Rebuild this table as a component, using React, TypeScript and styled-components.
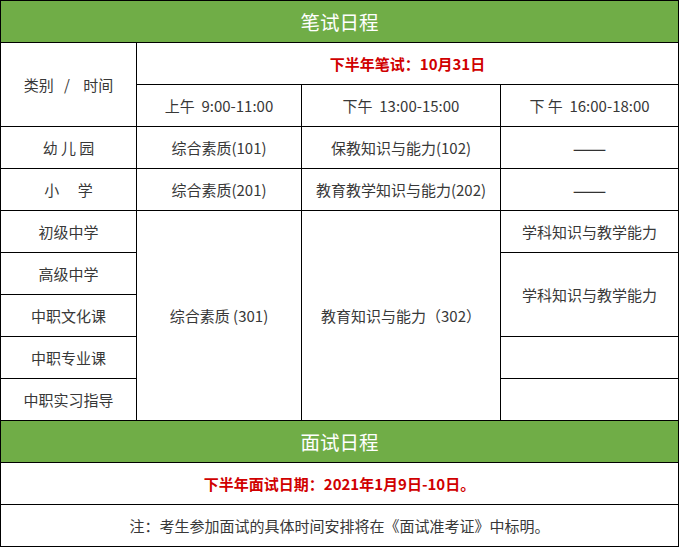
import React from 'react';
import styled, { createGlobalStyle } from 'styled-components';

const GlobalStyle = createGlobalStyle`
  html, body {
    margin: 0;
    padding: 0;
    background: #ffffff;
  }
`;

const Board = styled.div`
  display: grid;
  grid-template-columns: 135px 164px 198px 177px;
  grid-template-rows: repeat(13, 41px);
  gap: 1px;
  padding: 1px;
  width: 677px;
  background: #000000;
  font-family: "Noto Sans CJK SC", "Noto Sans", sans-serif;
`;

const Cell = styled.div<{ $col: string; $row: string }>`
  grid-column: ${(p) => p.$col};
  grid-row: ${(p) => p.$row};
  display: flex;
  align-items: center;
  justify-content: center;
  background: #ffffff;
  color: #383838;
  font-size: 15px;
  white-space: pre;
`;

const Banner = styled(Cell)`
  background: #70ad47;
  color: #ffffff;
  font-size: 19.5px;
  padding-bottom: 1px;
`;

const Notice = styled(Cell)`
  color: #d00000;
  font-weight: 700;
`;

const Dash = styled.span`
  font-size: 20px;
  line-height: 1;
  color: #333333;
`;

type Row = [string, string, string, string];

const fixedRows: Row[] = [
  ['4', '幼 儿 园', '综合素质(101)', '保教知识与能力(102)'],
  ['5', '小　 学', '综合素质(201)', '教育教学知识与能力(202)'],
];

const levels = ['初级中学', '高级中学', '中职文化课', '中职专业课', '中职实习指导'];

export default function App() {
  return (
    <>
      <GlobalStyle />
      <Board>
        <Banner $col="1 / 5" $row="1">笔试日程</Banner>

        <Cell $col="1" $row="2 / 4">类别   /    时间</Cell>
        <Notice $col="2 / 5" $row="2">下半年笔试：10月31日</Notice>
        <Cell $col="2" $row="3">上午  9:00-11:00</Cell>
        <Cell $col="3" $row="3">下午  13:00-15:00</Cell>
        <Cell $col="4" $row="3">下 午  16:00-18:00</Cell>

        {fixedRows.map(([row, name, a, b]) => (
          <React.Fragment key={row}>
            <Cell $col="1" $row={row}>{name}</Cell>
            <Cell $col="2" $row={row}>{a}</Cell>
            <Cell $col="3" $row={row}>{b}</Cell>
            <Cell $col="4" $row={row}><Dash>——</Dash></Cell>
          </React.Fragment>
        ))}

        {levels.map((name, i) => (
          <Cell key={name} $col="1" $row={String(6 + i)}>{name}</Cell>
        ))}
        <Cell $col="2" $row="6 / 11">综合素质 (301)</Cell>
        <Cell $col="3" $row="6 / 11">教育知识与能力（302）</Cell>
        <Cell $col="4" $row="6">学科知识与教学能力</Cell>
        <Cell $col="4" $row="7 / 9">学科知识与教学能力</Cell>
        <Cell $col="4" $row="9" />
        <Cell $col="4" $row="10" />

        <Banner $col="1 / 5" $row="11">面试日程</Banner>
        <Notice $col="1 / 5" $row="12">下半年面试日期：2021年1月9日-10日。</Notice>
        <Cell $col="1 / 5" $row="13">注：考生参加面试的具体时间安排将在《面试准考证》中标明。</Cell>
      </Board>
    </>
  );
}
